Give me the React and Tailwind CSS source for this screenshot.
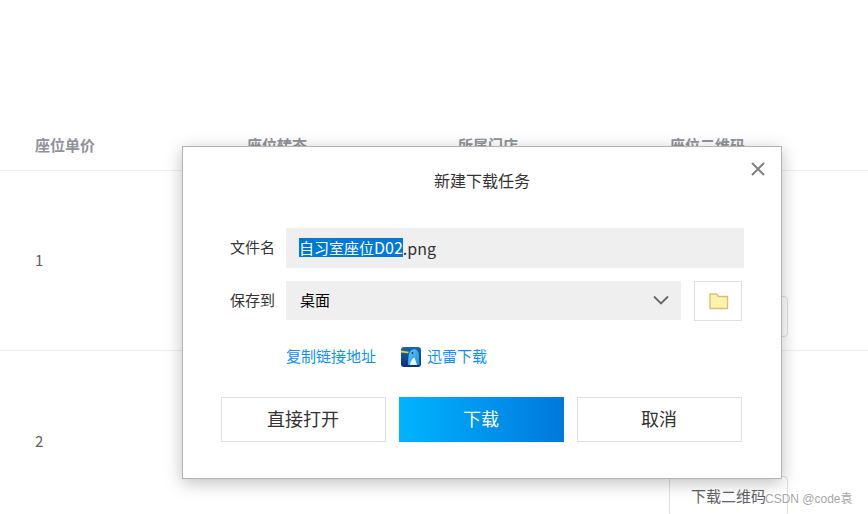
const font = { fontFamily: '"Noto Sans CJK SC", "Liberation Sans", sans-serif' };

function Row({ n, pt }) {
  return (
    <div className="grid h-[180px] grid-cols-[634px_1fr] border-b border-[#ebeef5] pl-[35px] text-[15px] text-[#606266]">
      <div className={pt}>{n}</div>
      <div className="pt-[125px]">
        <div className="flex h-[41px] w-[119px] items-center justify-center rounded-[4px] border border-[#dcdfe6] pb-[1px]">下载二维码</div>
      </div>
    </div>
  );
}

function FolderIcon() {
  return (
    <svg width="20" height="18" viewBox="0 0 20 18" className="ml-[1px]">
      <path d="M1 16.5V2h6.5l2 2.5H18.5v12z" fill="#fff3b0" stroke="#dcbf72" strokeWidth="1.4" />
    </svg>
  );
}

function ThunderIcon() {
  return (
    <svg width="20" height="20" viewBox="0 0 20 20" className="block">
      <defs>
        <linearGradient id="tb" x1="0" y1="0" x2="0" y2="1">
          <stop offset="0" stopColor="#1668b4" />
          <stop offset="1" stopColor="#0c2f78" />
        </linearGradient>
        <linearGradient id="tc" x1="0" y1="0" x2="1" y2="1">
          <stop offset="0" stopColor="#5cc8f2" />
          <stop offset="1" stopColor="#1f8fd8" />
        </linearGradient>
      </defs>
      <rect width="20" height="20" rx="3" fill="url(#tb)" />
      <path d="M0 3.6 L8 4.8 L7 6.2 L0 5.4z" fill="#f0d020" />
      <path d="M7 18 C7.5 10 7 4.5 11.5 2.5 C15.5 1.5 18 4.5 18 8.5 L18.5 18z" fill="url(#tc)" />
      <path d="M9 18 C9.5 14 11 11.5 13.5 10.5 L16 18z" fill="#e8f6fd" />
      <circle cx="11.5" cy="6" r="0.9" fill="#0c2f78" />
    </svg>
  );
}

function Btn({ children, primary }) {
  return primary ? (
    <button className="h-[45px] w-[165px] bg-gradient-to-r from-[#00b4ff] to-[#0078dc] pb-[2px] pr-[1px] text-[18px] text-white">{children}</button>
  ) : (
    <button className="h-[45px] w-[165px] border border-[#e0e0e0] bg-white pb-[2px] pr-[1px] text-[18px] text-[#333]">{children}</button>
  );
}

export default function App() {
  return (
    <div className="relative h-[514px] w-[868px] overflow-hidden bg-white" style={font}>
      <div className="pt-[120px]">
        <div className="grid h-[51px] grid-cols-[212px_211px_212px_1fr] items-center border-b border-[#ebeef5] pl-[35px] text-[15px] font-bold text-[#909399]">
          <div>座位单价</div>
          <div>座位转态</div>
          <div>所属门店</div>
          <div>座位二维码</div>
        </div>
        <Row n="1" pt="pt-[79px] leading-[20px]" />
        <Row n="2" pt="pt-[80px] leading-[20px]" />
      </div>

      <div className="absolute left-[182px] top-[146px] h-[333px] w-[600px] border border-[#b4b4b4] bg-white pl-[38px] pt-[21px] shadow-[0_4px_16px_rgba(0,0,0,0.25)]">
        <button className="absolute right-[15px] top-[14px]">
          <svg width="16" height="16" viewBox="0 0 16 16" className="block">
            <path d="M2 2L14 14M14 2L2 14" stroke="#808080" strokeWidth="2" fill="none" />
          </svg>
        </button>
        <div className="-ml-[38px] text-center text-[16px] leading-[24px] text-[#333]">新建下载任务</div>

        <div className="mt-[36px] flex items-center">
          <div className="w-[55px] pb-[1px] pl-[9px] text-[15px] text-[#333] whitespace-nowrap">文件名</div>
          <div className="ml-[10px] flex h-[40px] w-[458px] items-center bg-[#efefef] pb-[1px] pl-[13px] text-[15px] text-[#333]">
            <span className="bg-[#0078d7] leading-[19px] text-white">自习室座位<span className="text-[16px]">D02</span></span>
            <span className="text-[16px]">.png</span>
          </div>
        </div>

        <div className="mt-[13px] flex items-start">
          <div className="mt-[9px] w-[55px] pl-[9px] text-[15px] leading-[20px] text-[#333] whitespace-nowrap">保存到</div>
          <div className="ml-[10px] flex h-[39px] w-[395px] items-center justify-between bg-[#efefef] pb-[1px] pl-[14px] pr-[12px] text-[15px] text-black">
            <span>桌面</span>
            <svg width="16" height="10" viewBox="0 0 16 10">
              <path d="M1 1.5L8 8.5L15 1.5" stroke="#666" strokeWidth="1.8" fill="none" />
            </svg>
          </div>
          <div className="ml-[13px] flex h-[40px] w-[48px] items-center justify-center border border-[#e0e0e0]">
            <FolderIcon />
          </div>
        </div>

        <div className="ml-[65px] mt-[25px] flex h-[22px] items-center text-[15px] leading-[20px] text-[#0a93ff]">
          <span className="-translate-y-px">复制链接地址</span>
          <span className="ml-[25px]"><ThunderIcon /></span>
          <span className="ml-[6px] -translate-y-px">迅雷下载</span>
        </div>

        <div className="mt-[29px] flex gap-[13px]">
          <Btn>直接打开</Btn>
          <Btn primary>下载</Btn>
          <Btn>取消</Btn>
        </div>
      </div>

      <div className="absolute left-[765px] top-[490px] text-[12px] leading-[18px] text-[#a8a8a8]" style={{ fontFamily: '"Liberation Sans", "Noto Sans CJK SC", sans-serif' }}>CSDN @code袁</div>
    </div>
  );
}
